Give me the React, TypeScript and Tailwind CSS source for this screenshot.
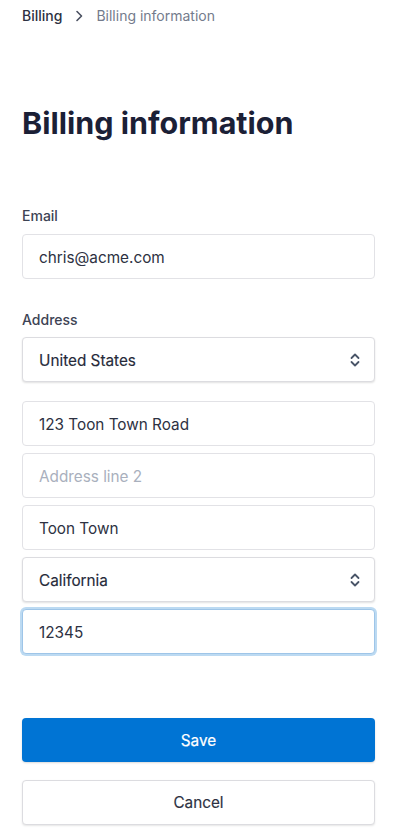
import React from "react";

const font = { fontFamily: "Inter, 'Noto Sans', sans-serif" };

function Chevrons() {
  return (
    <svg width="12" height="16" viewBox="0 0 12 16" fill="none" stroke="#4a5568" strokeWidth="1.8" strokeLinecap="round" strokeLinejoin="round">
      <path d="M2.5 6 L6 2.5 L9.5 6" />
      <path d="M2.5 10 L6 13.5 L9.5 10" />
    </svg>
  );
}

function Input({ value, placeholder, focus }: { value?: string; placeholder?: string; focus?: boolean }) {
  return (
    <div
      className={
        "h-[45px] rounded-[4px] bg-white flex items-center px-4 pt-[3px] text-[15.3px] " +
        (focus
          ? "border border-[#9ec5e8] shadow-[0_0_0_2px_#bcdaf2]"
          : "border border-[#e2e2e6]")
      }
    >
      {value ? (
        <span className="text-[#2d3142]">{value}</span>
      ) : (
        <span className="text-[#a9b0bd]">{placeholder}</span>
      )}
    </div>
  );
}

function Select({ value }: { value: string }) {
  return (
    <div className="h-[45px] rounded-[4px] bg-white flex items-center justify-between pl-4 pr-[13px] text-[15.3px] border border-[#dcdce0] shadow-[0_1px_2px_rgba(0,0,0,0.12)]">
      <span className="pt-[3px] text-[#262a3a] font-normal [-webkit-text-stroke:0.15px_#262a3a]">{value}</span>
      <Chevrons />
    </div>
  );
}

export default function App() {
  return (
    <div className="min-h-[839px] bg-white" style={font}>
      <div className="w-[353px] ml-[22px]">
        <div className="flex items-center pt-[9px] h-[23px] text-[14px] leading-[20px]">
          <span className="font-medium text-[#2d3142]">Billing</span>
          <svg className="mx-[13px]" width="8" height="12" viewBox="0 0 8 12" fill="none" stroke="#4a5060" strokeWidth="1.6" strokeLinecap="round" strokeLinejoin="round">
            <path d="M2 1.5 L6.5 6 L2 10.5" />
          </svg>
          <span className="text-[#747b8c]">Billing information</span>
        </div>
        <h1 className="mt-[82px] text-[30.5px] leading-[36px] font-bold text-[#1b2036]">
          Billing information
        </h1>
        <div className="mt-[65px] text-[14px] leading-[20px] font-medium text-[#3d4354]">Email</div>
        <div className="mt-[8px]">
          <Input value="chris@acme.com" />
        </div>
        <div className="mt-[31px] text-[14px] leading-[20px] font-medium text-[#3d4354]">Address</div>
        <div className="mt-[7px] flex flex-col gap-[7px]">
          <div className="mb-[12px]">
            <Select value="United States" />
          </div>
          <Input value="123 Toon Town Road" />
          <Input placeholder="Address line 2" />
          <Input value="Toon Town" />
          <Select value="California" />
          <Input value="12345" focus />
        </div>
        <button className="mt-[64px] w-full h-[44px] pt-[2px] rounded-[4px] bg-[#0074d4] text-white text-[15.3px] font-normal [-webkit-text-stroke:0.2px_#ffffff] shadow-[0_1px_2px_rgba(0,0,0,0.15)]">
          Save
        </button>
        <button className="mt-[18px] w-full h-[45px] pt-[2px] rounded-[4px] bg-white border border-[#dcdce0] text-[#2d3142] text-[15.3px] font-normal [-webkit-text-stroke:0.15px_#2d3142] shadow-[0_1px_2px_rgba(0,0,0,0.1)]">
          Cancel
        </button>
      </div>
    </div>
  );
}
